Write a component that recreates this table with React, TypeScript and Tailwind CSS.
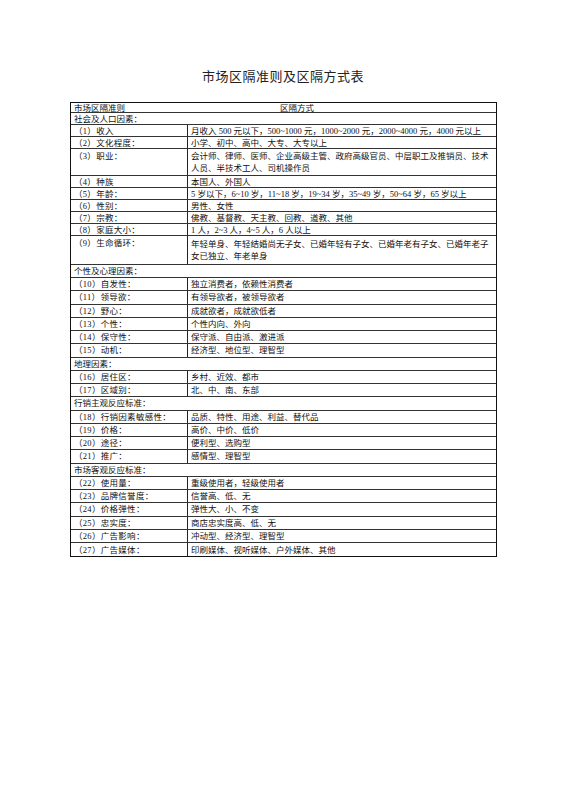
type Row =
  | { kind: 'group'; label: string; h: string }
  | { kind: 'item'; label: string; value: React.ReactNode; h: string; tall?: boolean };

const rows: Row[] = [
  { kind: 'group', label: '社会及人口因素：', h: 'h-[12px]' },
  { kind: 'item', label: '（1）收入', value: '月收入 500 元以下，500~1000 元，1000~2000 元，2000~4000 元，4000 元以上', h: 'h-[12px]' },
  { kind: 'item', label: '（2）文化程度：', value: '小学、初中、高中、大专、大专以上', h: 'h-[12px]' },
  {
    kind: 'item',
    label: '（3）职业：',
    value: (
      <>
        会计师、律师、医师、企业高级主管、政府高级官员、中层职工及推销员、技术
        <br />
        人员、半技术工人、司机操作员
      </>
    ),
    h: 'h-[27px]',
    tall: true,
  },
  { kind: 'item', label: '（4）种族', value: '本国人、外国人', h: 'h-[12px]' },
  { kind: 'item', label: '（5）年龄：', value: '5 岁以下，6~10 岁，11~18 岁，19~34 岁，35~49 岁，50~64 岁，65 岁以上', h: 'h-[12px]' },
  { kind: 'item', label: '（6）性别：', value: '男性、女性', h: 'h-[12px]' },
  { kind: 'item', label: '（7）宗教：', value: '佛教、基督教、天主教、回教、道教、其他', h: 'h-[12px]' },
  { kind: 'item', label: '（8）家庭大小：', value: '1 人，2~3 人，4~5 人，6 人以上', h: 'h-[12px]' },
  {
    kind: 'item',
    label: '（9）生命循环：',
    value: (
      <>
        年轻单身、年轻结婚尚无子女、已婚年轻有子女、已婚年老有子女、已婚年老子
        <br />
        女已独立、年老单身
      </>
    ),
    h: 'h-[29px]',
    tall: true,
  },
  { kind: 'group', label: '个性及心理因素：', h: 'h-[13px]' },
  { kind: 'item', label: '（10）自发性：', value: '独立消费者，依赖性消费者', h: 'h-[13.25px]' },
  { kind: 'item', label: '（11）领导欲：', value: '有领导欲者，被领导欲者', h: 'h-[13.25px]' },
  { kind: 'item', label: '（12）野心：', value: '成就欲者，成就欲低者', h: 'h-[13.25px]' },
  { kind: 'item', label: '（13）个性：', value: '个性内向、外向', h: 'h-[13.25px]' },
  { kind: 'item', label: '（14）保守性：', value: '保守派、自由派、激进派', h: 'h-[13.25px]' },
  { kind: 'item', label: '（15）动机：', value: '经济型、地位型、理智型', h: 'h-[13.25px]' },
  { kind: 'group', label: '地理因素：', h: 'h-[13.25px]' },
  { kind: 'item', label: '（16）居住区：', value: '乡村、近效、都市', h: 'h-[13.25px]' },
  { kind: 'item', label: '（17）区域别：', value: '北、中、南、东部', h: 'h-[13.25px]' },
  { kind: 'group', label: '行销主观反应标准：', h: 'h-[13.25px]' },
  { kind: 'item', label: '（18）行销因素敏感性：', value: '品质、特性、用途、利益、替代品', h: 'h-[13.25px]' },
  { kind: 'item', label: '（19）价格：', value: '高价、中价、低价', h: 'h-[13.25px]' },
  { kind: 'item', label: '（20）途径：', value: '便利型、选购型', h: 'h-[13.25px]' },
  { kind: 'item', label: '（21）推广：', value: '感情型、理智型', h: 'h-[13.25px]' },
  { kind: 'group', label: '市场客观反应标准：', h: 'h-[13.25px]' },
  { kind: 'item', label: '（22）使用量：', value: '重级使用者，轻级使用者', h: 'h-[13.25px]' },
  { kind: 'item', label: '（23）品牌信誉度：', value: '信誉高、低、无', h: 'h-[13.25px]' },
  { kind: 'item', label: '（24）价格弹性：', value: '弹性大、小、不变', h: 'h-[13.25px]' },
  { kind: 'item', label: '（25）忠实度：', value: '商店忠实度高、低、无', h: 'h-[13.25px]' },
  { kind: 'item', label: '（26）广告影响：', value: '冲动型、经济型、理智型', h: 'h-[13.25px]' },
  { kind: 'item', label: '（27）广告媒体：', value: '印刷媒体、视听媒体、户外媒体、其他', h: 'h-[13.25px]' },
];

const font = 'font-["Liberation_Serif","Noto_Sans_CJK_SC",serif]';

export default function App() {
  return (
    <div className={`h-[800px] w-[566px] bg-white text-[#111] ${font}`}>
      <div className="pt-[69px] text-center text-[13px] leading-[16px] tracking-[0.5px] text-[#222]">
        市场区隔准则及区隔方式表
      </div>

      <div className="ml-[70px] mt-[17px] w-[427px] border-[1.5px] border-[#111] text-[8.5px] leading-[12px]">
        <div className="flex h-[10px] items-center border-b border-[#333] whitespace-nowrap">
          <div className="w-[117px] pl-[3px]">市场区隔准则</div>
          <div className="pl-[92px]">区隔方式</div>
        </div>

        {rows.map((r, i) => {
          const last = i === rows.length - 1;
          const bottom = last ? '' : 'border-b border-[#333]';
          if (r.kind === 'group') {
            return (
              <div key={i} className={`flex items-center pl-[3px] whitespace-nowrap ${r.h} ${bottom}`}>
                {r.label}
              </div>
            );
          }
          return (
            <div key={i} className={`flex whitespace-nowrap ${r.h} ${bottom}`}>
              <div
                className={`flex w-[117px] shrink-0 border-r border-[#222] pl-[3px] tracking-[0.3px] ${
                  r.tall ? 'items-start pt-[1px]' : 'items-center'
                }`}
              >
                {r.label}
              </div>
              <div className="flex items-center pl-[3px]">
                <div>{r.value}</div>
              </div>
            </div>
          );
        })}
      </div>
    </div>
  );
}
